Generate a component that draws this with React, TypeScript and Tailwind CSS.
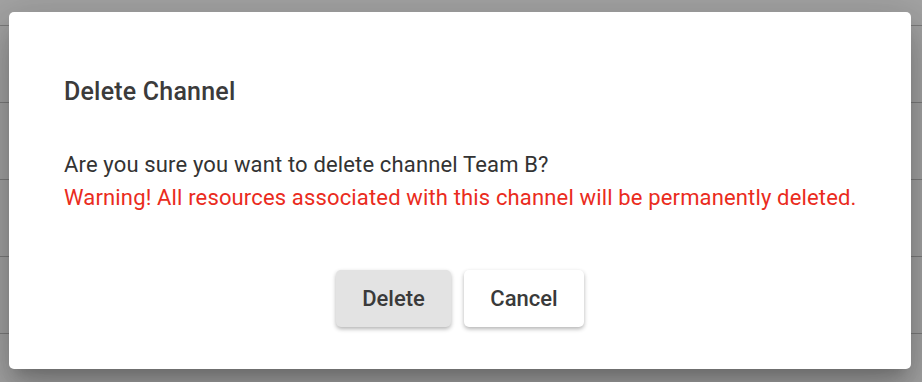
const rows = [0, 1, 2, 3, 4];

export default function App() {
  return (
    <div className="relative h-[382px] w-[922px] overflow-hidden bg-[#a3a3a3] font-['Roboto',_'Liberation_Sans',_sans-serif]">
      {/* page behind the overlay */}
      <div className="flex flex-col pt-[25px]">
        {rows.map((r) => (
          <div key={r} className="h-[77px] border-t border-[#7c7c7c]" />
        ))}
      </div>

      {/* Dialog */}
      <div className="absolute left-[9px] top-[12px] flex h-[357px] w-[902px] flex-col rounded-[5px] bg-white pl-[55px] pr-[30px] pt-[64px] shadow-[0_11px_15px_-7px_rgba(0,0,0,0.2),0_24px_38px_3px_rgba(0,0,0,0.14),0_9px_46px_8px_rgba(0,0,0,0.12)]">
        <h2 className="text-[25px] leading-[32px] font-medium tracking-[0.2px] text-[#3b3b3b]">Delete Channel</h2>

        <div className="mt-[40px] text-[22px] leading-[33px] tracking-[0.15px] text-[#333333]">
          <p>Are you sure you want to delete channel Team B?</p>
          <p className="text-[#ea2b20]">
            Warning! All resources associated with this channel will be permanently deleted.
          </p>
        </div>

        <div className="mt-[56px] flex justify-center gap-[13px] pr-[25px]">
          <button className="h-[57px] w-[115px] rounded-[5px] bg-[#e3e3e3] text-[22px] font-medium text-[#3a3a3a] shadow-[0_2px_4px_rgba(0,0,0,0.3)]">
            Delete
          </button>
          <button className="h-[57px] w-[120px] rounded-[5px] bg-white text-[22px] font-medium text-[#3a3a3a] shadow-[0_2px_4px_rgba(0,0,0,0.3)]">
            Cancel
          </button>
        </div>
      </div>
    </div>
  );
}
